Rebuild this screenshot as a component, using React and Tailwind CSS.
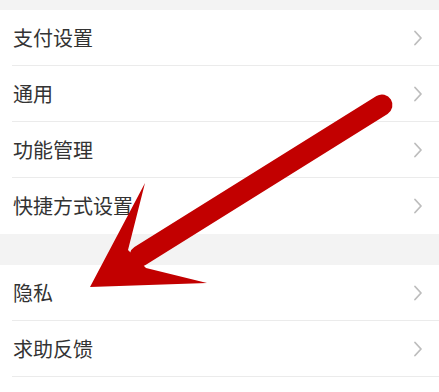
import React from "react";

const GROUPS = [
  ["支付设置", "通用", "功能管理", "快捷方式设置"],
  ["隐私", "求助反馈"],
];

function Chevron() {
  return (
    <svg width="10" height="16" viewBox="0 0 10 16" className="shrink-0">
      <path d="M2 1.5 L8 8 L2 14.5" fill="none" stroke="#bdbdbd" strokeWidth="1.8" strokeLinecap="round" strokeLinejoin="round" />
    </svg>
  );
}

function Row({ label, last }) {
  return (
    <div className="bg-white pl-[12px]">
      <div
        className={`flex h-[56px] items-center justify-between pr-[16px] ${
          last ? "" : "border-b border-[#ebebeb]"
        }`}
      >
        <span className="pl-[1px] text-[20px] text-[#333333]">{label}</span>
        <Chevron />
      </div>
    </div>
  );
}

export default function App() {
  return (
    <div
      className="relative h-[392px] w-[439px] overflow-hidden bg-white"
      style={{ fontFamily: '"Noto Sans CJK SC", "Noto Sans", sans-serif' }}
    >
      <div className="h-[10px] bg-[#f3f3f3]" />
      {GROUPS[0].map((label, i) => (
        <Row key={label} label={label} last={i === GROUPS[0].length - 1} />
      ))}
      <div className="h-[31px] bg-[#f3f3f3]" />
      {GROUPS[1].map((label) => (
        <Row key={label} label={label} />
      ))}

      {/* red arrow annotation */}
      <svg className="pointer-events-none absolute left-0 top-0" width="439" height="392" viewBox="0 0 439 392">
        <line x1="382" y1="105" x2="140" y2="256" stroke="#c20000" strokeWidth="21" strokeLinecap="round" />
        <polygon points="90,287 145,183 128,250 146,268 207,283" fill="#c20000" />
      </svg>
    </div>
  );
}
